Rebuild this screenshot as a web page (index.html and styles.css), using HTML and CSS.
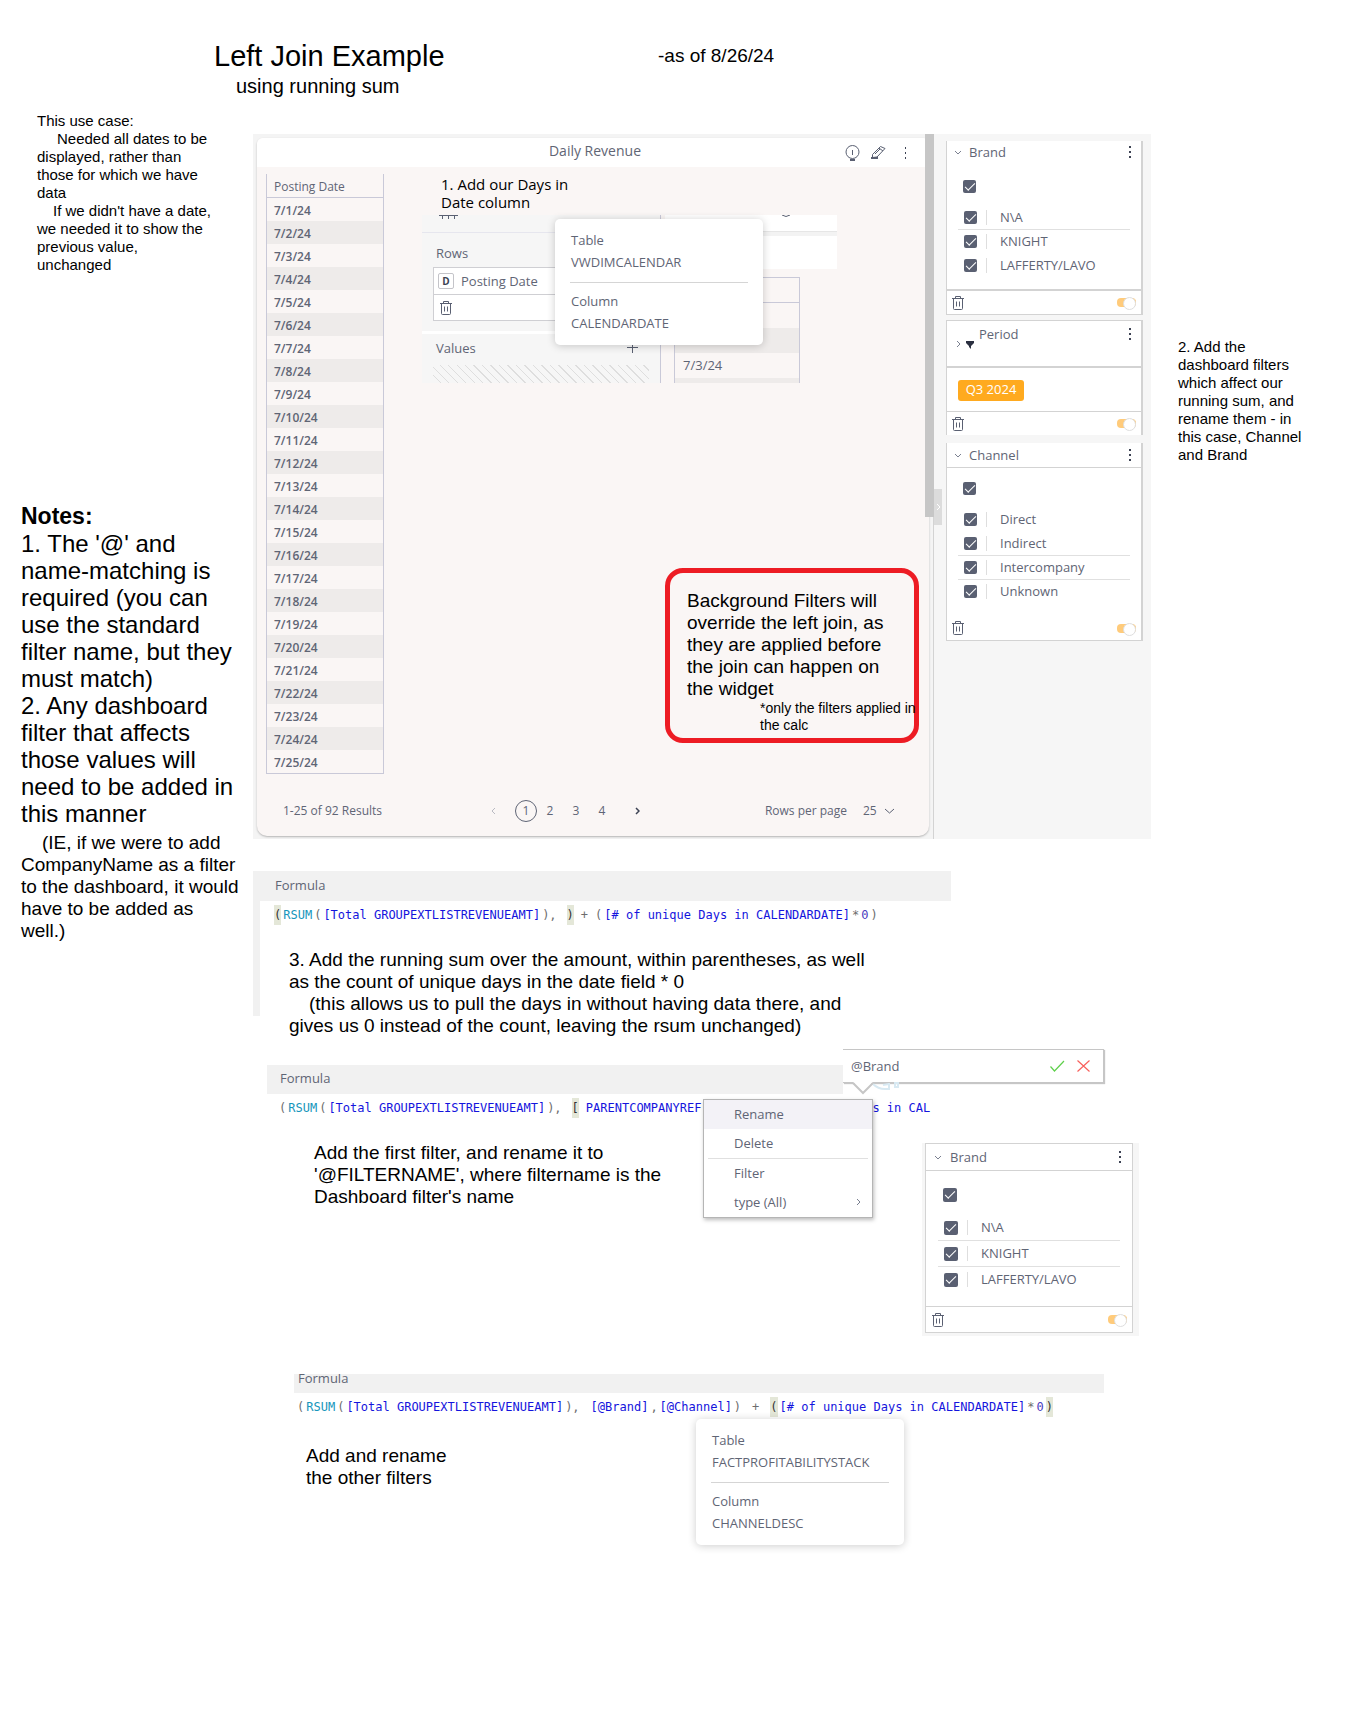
FILE: index.html
```html
<!DOCTYPE html>
<html lang="en">
<head>
<meta charset="utf-8">
<title>Left Join Example</title>
<link rel="stylesheet" href="styles.css">
</head>
<body>
<svg width="0" height="0" class="defs" aria-hidden="true">
  <symbol id="trash" viewBox="0 0 12 14"><path d="M0 2.5h12M3.5 2V.5h5V2M1.5 3v9.5q0 1 1 1h7q1 0 1-1V3M4.5 5.5v5M7.5 5.5v5" fill="none" stroke="#5a6072"/></symbol>
  <symbol id="dots" viewBox="0 0 2 12"><path d="M0 0h2v2H0zM0 5h2v2H0zM0 10h2v2H0z" fill="#3d4354"/></symbol>
  <symbol id="down" viewBox="0 0 8 5"><path d="M1 1l3 3 3-3" fill="none" stroke="#7a8090"/></symbol>
  <symbol id="right" viewBox="0 0 5 8"><path d="M1 1l3 3-3 3" fill="none" stroke="#7a8090"/></symbol>
</svg>

<header class="page-head">
  <div class="titles">
    <h1>Left Join Example</h1>
    <p class="subtitle">using running sum</p>
  </div>
  <p class="as-of">-as of 8/26/24</p>
</header>

<div class="page">
  <aside class="left">
    <div class="use-case note-small">
      <p>This use case:</p>
      <p class="indent">Needed all dates to be<br>displayed, rather than<br>those for which we have<br>data</p>
      <p class="indent-less">If we didn't have a date,<br>we needed it to show the<br>previous value,<br>unchanged</p>
    </div>
    <div class="notes">
      <h2>Notes:</h2>
      <p>1. The '@' and<br>name-matching is<br>required (you can<br>use the standard<br>filter name, but they<br>must match)</p>
      <p>2. Any dashboard<br>filter that affects<br>those values will<br>need to be added in<br>this manner</p>
      <p class="note aside-note">(IE, if we were to add<br>CompanyName as a filter<br>to the dashboard, it would<br>have to be added as<br>well.)</p>
    </div>
  </aside>

  <main>
    <section class="dashboard">
      <div class="stage">
        <article class="widget">
          <header class="widget-head">
            <h3>Daily Revenue</h3>
            <div class="tools">
              <svg width="15" height="16" viewBox="0 0 15 16"><circle cx="7.500" cy="7" r="6.500" fill="none" stroke="#5a6072"/><path d="M7.500 5v5" stroke="#5a6072"/><path d="M5 14h5v2H5z" fill="#5a6072"/></svg>
              <svg width="15" height="15" viewBox="0 0 15 15"><path d="M1.500 9.500l8-8 4.500 2-8 8.500-4.500.5zM8 3l4 3M4 9l5-5" fill="none" stroke="#5a6072"/><path d="M0 12h7v2H0z" fill="#5a6072"/></svg>
              <svg width="2" height="12" viewBox="0 0 2 12"><path d="M0 0h1v2H0zM0 5h1v2H0zM0 10h1v2H0z" fill="#3d4354"/></svg>
            </div>
          </header>
          <div class="widget-body">
            <table class="dates">
              <thead><tr><th>Posting Date</th></tr></thead>
              <tbody>
                <tr><td>7/1/24</td></tr><tr><td>7/2/24</td></tr><tr><td>7/3/24</td></tr><tr><td>7/4/24</td></tr><tr><td>7/5/24</td></tr>
                <tr><td>7/6/24</td></tr><tr><td>7/7/24</td></tr><tr><td>7/8/24</td></tr><tr><td>7/9/24</td></tr><tr><td>7/10/24</td></tr>
                <tr><td>7/11/24</td></tr><tr><td>7/12/24</td></tr><tr><td>7/13/24</td></tr><tr><td>7/14/24</td></tr><tr><td>7/15/24</td></tr>
                <tr><td>7/16/24</td></tr><tr><td>7/17/24</td></tr><tr><td>7/18/24</td></tr><tr><td>7/19/24</td></tr><tr><td>7/20/24</td></tr>
                <tr><td>7/21/24</td></tr><tr><td>7/22/24</td></tr><tr><td>7/23/24</td></tr><tr><td>7/24/24</td></tr><tr><td>7/25/24</td></tr>
              </tbody>
            </table>
            <div class="work">
              <p class="note-small step">1. Add our Days in<br>Date column</p>
              <div class="editor">
                <div class="fields">
                  <div class="fields-top"><svg width="20" height="4" viewBox="0 0 20 4"><path d="M0 .5h19M3.500 0v4M9.500 0v4M15.500 0v4" stroke="#5a6072" fill="none"/></svg></div>
                  <div class="rows-group">
                    <p>Rows</p>
                    <div class="field">
                      <div class="field-name"><b>D</b><span>Posting Date</span></div>
                      <div class="field-foot"><svg width="12" height="14"><use href="#trash"/></svg></div>
                    </div>
                  </div>
                  <div class="values-group">
                    <div class="values-head"><span>Values</span><svg width="11" height="11" viewBox="0 0 11 11"><path d="M5.500 0v11M0 5.500h11" stroke="#5a6072"/></svg></div>
                    <div class="hatch"></div>
                  </div>
                </div>
                <div class="preview">
                  <div class="preview-top"><svg width="10" height="3" viewBox="0 0 10 3"><path d="M1 0q4 3 8 0" fill="none" stroke="#5a6072"/></svg></div>
                  <div class="preview-bar"></div>
                  <div class="preview-grid"><i></i><i></i><i class="alt"></i><i>7/3/24</i><i class="alt last"></i></div>
                </div>
                <div class="tip tip-calendar">
                  <p>Table</p><p>VWDIMCALENDAR</p><hr><p>Column</p><p>CALENDARDATE</p>
                </div>
              </div>
              <div class="callout">
                <p class="note">Background Filters will<br>override the left join, as<br>they are applied before<br>the join can happen on<br>the widget</p>
                <p class="fine">*only the filters applied in<br>the calc</p>
              </div>
            </div>
          </div>
          <footer class="pager">
            <span class="results">1-25 of 92 Results</span>
            <nav aria-label="Pages">
              <button aria-label="Previous" class="faint"><svg width="5" height="8"><use href="#right" transform="rotate(180 2.500 4)"/></svg></button>
              <button class="current">1</button><button>2</button><button>3</button><button>4</button>
              <button aria-label="Next" class="next"><svg width="5" height="8" viewBox="0 0 5 8"><path d="M1 1l3 3-3 3" fill="none" stroke="#3d4354" stroke-width="1.500"/></svg></button>
            </nav>
            <label class="per-page">Rows per page
              <span class="pick"><select><option>25</option></select><svg width="11" height="6" viewBox="0 0 11 6"><path d="M1 1l4.500 4L10 1" fill="none" stroke="#5a6072"/></svg></span>
            </label>
          </footer>
        </article>
        <div class="scroll"></div>
      </div>

      <div class="filters">
        <div class="handle"><svg width="5" height="8" viewBox="0 0 5 8"><path d="M1 1l3 3-3 3" fill="none" stroke="#fff"/></svg></div>
        <section class="card card-brand">
          <header><svg width="8" height="5"><use href="#down"/></svg><h4>Brand</h4><svg width="2" height="12"><use href="#dots"/></svg></header>
          <div class="options">
            <label class="all"><input type="checkbox" checked aria-label="All brands"></label>
            <label class="ruled"><input type="checkbox" checked><span>N\A</span></label>
            <label><input type="checkbox" checked><span>KNIGHT</span></label>
            <label><input type="checkbox" checked><span>LAFFERTY/LAVO</span></label>
          </div>
          <footer><svg width="12" height="14"><use href="#trash"/></svg><input type="checkbox" class="toggle" checked aria-label="Brand filter on"></footer>
        </section>
        <section class="card card-period">
          <header><svg width="5" height="8"><use href="#right"/></svg><svg class="funnel" width="8" height="8" viewBox="0 0 8 8"><path d="M0 0h8v2L5 5v3L3 6V5L0 2z" fill="#2b3040"/></svg><h4>Period</h4><svg width="2" height="12"><use href="#dots"/></svg></header>
          <div class="chips"><span class="chip">Q3 2024</span></div>
          <footer><svg width="12" height="14"><use href="#trash"/></svg><input type="checkbox" class="toggle" checked aria-label="Period filter on"></footer>
        </section>
        <section class="card card-channel">
          <header><svg width="8" height="5"><use href="#down"/></svg><h4>Channel</h4><svg width="2" height="12"><use href="#dots"/></svg></header>
          <div class="options">
            <label class="all"><input type="checkbox" checked aria-label="All channels"></label>
            <label><input type="checkbox" checked><span>Direct</span></label>
            <label class="ruled"><input type="checkbox" checked><span>Indirect</span></label>
            <label class="ruled"><input type="checkbox" checked><span>Intercompany</span></label>
            <label><input type="checkbox" checked><span>Unknown</span></label>
          </div>
          <footer><svg width="12" height="14"><use href="#trash"/></svg><input type="checkbox" class="toggle" checked aria-label="Channel filter on"></footer>
        </section>
      </div>
    </section>

    <section class="formula formula-sum">
      <h3 class="bar">Formula</h3>
      <code><i class="hl">(</i><i class="fn">RSUM</i><i>(</i><i class="ref">[Total GROUPEXTLISTREVENUEAMT]</i><i>),</i><i class="hl far">)</i><i class="mid">+</i><i class="mid">(</i><i class="ref">[# of unique Days in CALENDARDATE]</i><i>*</i><i class="num">0</i><i>)</i></code>
      <p class="note">3. Add the running sum over the amount, within parentheses, as well<br>as the count of unique days in the date field * 0<br><span class="lead"></span>(this allows us to pull the days in without having data there, and<br>gives us 0 instead of the count, leaving the rsum unchanged)</p>
    </section>

    <section class="formula formula-rename">
      <h3 class="bar">Formula</h3>
      <code><i>(</i><i class="fn">RSUM</i><i>(</i><i class="ref">[Total GROUPEXTLISTREVENUEAMT]</i><i>),</i><i class="hl far">[</i><i class="ref mid">PARENTCOMPANYREF</i><i class="ref tail">s in CAL</i></code>
      <div class="split">
        <p class="note">Add the first filter, and rename it to<br>'@FILTERNAME', where filtername is the<br>Dashboard filter's name</p>
        <div class="card-wrap">
          <section class="card card-large">
            <header><svg width="8" height="5"><use href="#down"/></svg><h4>Brand</h4><svg width="2" height="12"><use href="#dots"/></svg></header>
            <div class="options">
              <label class="all"><input type="checkbox" checked aria-label="All brands"></label>
              <label class="ruled"><input type="checkbox" checked><span>N\A</span></label>
              <label class="ruled"><input type="checkbox" checked><span>KNIGHT</span></label>
              <label><input type="checkbox" checked><span>LAFFERTY/LAVO</span></label>
            </div>
            <footer><svg width="12" height="14"><use href="#trash"/></svg><input type="checkbox" class="toggle" checked aria-label="Brand filter on"></footer>
          </section>
        </div>
      </div>
      <div class="rename">
        <input type="text" value="@Brand" aria-label="Filter name">
        <button aria-label="Accept"><svg width="15" height="12" viewBox="0 0 15 12"><path d="M.5 6.500l4 4.500L14 1" fill="none" stroke="#5fd04c" stroke-width="1.200"/></svg></button>
        <button aria-label="Cancel"><svg width="13" height="12" viewBox="0 0 13 12"><path d="M.5.5l12 11M12.500.5l-12 11" fill="none" stroke="#f8605c" stroke-width="1.200"/></svg></button>
        <svg class="pointer" width="56" height="14" viewBox="0 0 56 14"><path d="M21 2q5 5 12 5h4V1M31 3l6-1M43 1h3v4h-3z" fill="none" stroke="#d8e9f2" stroke-width="2"/><path d="M1 0l10 10L21 0z" fill="#fff"/><path d="M1 1l10 10L21 1" fill="none" stroke="#c6c6c6" stroke-width="2"/></svg>
      </div>
      <div class="menu">
        <button class="active">Rename</button>
        <button>Delete</button>
        <hr>
        <button>Filter</button>
        <button>type (All)<svg width="5" height="8"><use href="#right"/></svg></button>
      </div>
    </section>

    <section class="formula formula-other">
      <h3 class="bar">Formula</h3>
      <code><i>(</i><i class="fn">RSUM</i><i>(</i><i class="ref">[Total GROUPEXTLISTREVENUEAMT]</i><i>),</i><i class="ref far">[@Brand]</i><i>,</i><i class="ref">[@Channel]</i><i>)</i><i class="mid">+</i><i class="hl mid">(</i><i class="ref">[# of unique Days in CALENDARDATE]</i><i>*</i><i class="num">0</i><i class="hl">)</i></code>
      <p class="note">Add and rename<br>the other filters</p>
      <div class="tip tip-channel">
        <p>Table</p><p>FACTPROFITABILITYSTACK</p><hr><p>Column</p><p>CHANNELDESC</p>
      </div>
    </section>
  </main>

  <aside class="right">
    <p class="note-small">2. Add the<br>dashboard filters<br>which affect our<br>running sum, and<br>rename them - in<br>this case, Channel<br>and Brand</p>
  </aside>
</div>
</body>
</html>
```
FILE: styles.css
```css
* { box-sizing: border-box; }
body { margin: 0; background: #fff; color: #000; font-family: "Liberation Sans", Arial, sans-serif; }
h1, h2, h3, h4, p { margin: 0; font-weight: normal; }
button, input, select { font: inherit; color: inherit; margin: 0; }
button { border: 0; background: none; padding: 0; }
svg { display: block; flex: none; }
.defs { position: absolute; }

/* page text */
.page-head { display: flex; padding: 39px 0 0 214px; height: 112px; }
.titles { width: 444px; }
h1 { font-size: 29px; line-height: 34px; }
.subtitle { font-size: 20px; line-height: 26px; padding-left: 22px; }
.as-of { font-size: 19px; line-height: 34px; }
.page { display: grid; grid-template-columns: 253px minmax(0, 1fr) 197px; padding-bottom: 160px; }
.note { font-size: 19px; line-height: 22px; white-space: nowrap; }
.note-small { font-size: 15px; line-height: 18px; white-space: nowrap; }
.use-case { padding-left: 37px; height: 391px; }
.indent { text-indent: 20px; }
.indent-less { text-indent: 16px; }
.notes { padding-left: 21px; font-size: 24px; line-height: 27px; white-space: nowrap; }
.notes h2 { font-size: 23px; line-height: 27px; font-weight: bold; }
.aside-note { text-indent: 21px; padding-top: 5px; }
.lead { display: inline-block; width: 20px; }
.right { padding: 226px 0 0 27px; }
main { padding-top: 22px; min-width: 0; }

/* dashboard */
.dashboard, .formula h3, .menu, .rename, .tip, .card { font-family: "Open Sans", "Noto Sans", sans-serif; font-size: 13px; color: #5f6575; }
.dashboard { display: grid; grid-template-columns: minmax(0, 1fr) 217px; background: #f6f6f6; }
.stage { position: relative; padding: 4px 4px 3px 4px; border-right: 1px solid #d3d3d3; background: #f4f4f4; }
.widget { background: #faf6f5; border-radius: 6px 6px 10px 10px; box-shadow: 0 1px 2px #b5b5b5; overflow: hidden; }
.scroll { position: absolute; top: 0; right: -1px; width: 9px; height: 383px; background: #c6c6c6; }
.widget-head { display: flex; align-items: center; justify-content: flex-end; height: 29px; background: #fff; }
.widget-head h3 { font-size: 14px; line-height: 20px; padding-bottom: 3px; margin-right: 204px; }
.tools { display: flex; align-items: center; gap: 11px; width: 84px; }
.tools svg:last-child { margin-left: 8px; }
.widget-body { display: flex; padding: 7px 0 0 9px; }
.dates { width: 118px; flex: none; border-collapse: separate; border-spacing: 0; border: 1px solid #c9c9d8; border-top: 0; font-size: 12px; line-height: 16px; }
.dates th { height: 24px; padding: 3px 7px 0; text-align: left; font-size: 12px; font-weight: normal; border-bottom: 1px solid #c9c9d8; }
.dates td { height: 23px; padding: 2px 7px 0; font-weight: 600; font-size: 12px; }
.dates tr:nth-child(even) td { background: #eeebea; }
.work { padding-left: 38px; }
.step { padding: 1px 0 4px 19px; color: #000; }

.editor { position: relative; display: flex; width: 415px; height: 168px; }
.fields { width: 239px; background: #f6f6f6; border-right: 1px solid #c9c9d8; }
.fields-top { height: 18px; padding-left: 17px; border-bottom: 1px solid #e6e6ee; }
.rows-group { height: 101px; padding: 10px 0 0 11px; border-bottom: 3px solid #fff; }
.rows-group p { line-height: 20px; padding-left: 3px; }
.field { margin-top: 4px; background: #fff; border: 1px solid #cfcfd3; width: 216px; }
.field-name, .field-foot { display: flex; align-items: center; height: 27px; padding-left: 4px; gap: 7px; border-bottom: 1px solid #cfcfd3; }
.field-foot { height: 25px; padding-left: 6px; border: 0; }
.field-name b { width: 16px; height: 16px; border: 1px solid #c4c4c9; font-size: 10px; line-height: 14px; text-align: center; color: #3d4354; border-radius: 2px; }
.values-group { padding: 0 11px; }
.values-head { display: flex; justify-content: space-between; align-items: center; height: 27px; padding: 0 11px 0 3px; }
.hatch { margin-top: 4px; height: 18px; background: repeating-linear-gradient(45deg, #f6f6f6 0 5px, #dedede 5px 6px); }
.preview { flex: 1; padding-left: 4px; }
.preview-top { height: 17px; background: #fff; border-bottom: 1px solid #e6e6e6; padding-left: 116px; }
.preview-bar { height: 37px; background: #fff; border-top: 4px solid #f3f3f3; }
.preview-grid { margin: 8px 0 0 9px; width: 126px; height: 106px; border: 1px solid #c9c9d8; border-bottom: 0; font-weight: 600; }
.preview-grid i { display: block; height: 25px; padding-left: 8px; font-style: normal; font-weight: 500; line-height: 24px; }
.preview-grid i:first-child { border-bottom: 1px solid #c9c9d8; }
.preview-grid .alt { background: #eeebea; }
.preview-grid .last { height: 5px; }

.tip { position: absolute; width: 208px; padding: 10px 15px 11px; background: #fff; border-radius: 5px; box-shadow: 0 1px 9px #0003; line-height: 22px; }
.tip p { padding-left: 1px; white-space: nowrap; }
.tip hr { border: 0; border-top: 1px solid #d5d5d5; margin: 9px 0 7px; }
.tip-calendar { left: 133px; top: 4px; }
.tip-channel { left: 402px; top: 45px; }

.callout { margin: 185px 0 0 243px; width: 254px; height: 175px; border: 5px solid #ed1c24; border-radius: 18px; padding: 17px 0 0 17px; color: #000; font-family: "Liberation Sans", Arial, sans-serif; }
.fine { font-size: 14px; line-height: 17px; padding-left: 73px; white-space: nowrap; }

.pager { display: flex; align-items: center; height: 62px; padding: 11px 34px 0 26px; }
.results { width: 210px; font-size: 12px; }
.pager nav { display: flex; align-items: center; flex: 1; }
.pager nav button { width: 26px; text-align: center; font-size: 12px; }
.pager nav svg { margin: auto; }
.pager nav .faint { width: 8px; margin-right: 14px; margin-left: -4px; opacity: 0.5; }
.pager nav .current { width: 22px; height: 22px; border: 1px solid #5f6575; border-radius: 50%; margin-left: 4px; }
.pager nav .next { margin-left: 9px; }
.per-page { display: flex; align-items: center; gap: 16px; font-size: 12px; white-space: nowrap; }
.pick { display: flex; align-items: center; gap: 6px; }
.per-page select { appearance: none; border: 0; background: none; font-size: 12px; width: 15px; padding: 0; }

/* filter cards */
.filters { position: relative; padding: 7px 8px 0 12px; }
.handle { position: absolute; left: 0; top: 355px; width: 8px; height: 36px; background: #dcdcdc; display: grid; place-items: center; }
.card { background: #fff; border: solid #d3d3d3; border-width: 0 2px 1px 1px; }
.card header { display: flex; align-items: center; padding: 0 10px 0 7px; height: 22px; }
.card h4 { flex: 1; font-size: 13px; padding-left: 7px; }
.options { padding: 12px 11px 11px; }
.options label { display: flex; align-items: center; height: 24px; padding-left: 6px; gap: 9px; font-size: 13px; border-bottom: 1px solid transparent; }
.options .all { padding-left: 5px; margin-bottom: 7px; }
.options .ruled { border-color: #e0e0e0; }
.options span { border-left: 1px solid #dedede; padding-left: 13px; line-height: 15px; }
.options input { appearance: none; position: relative; width: 13px; height: 13px; border-radius: 2px; background: #5a6072; }
.options input::after { content: ""; position: absolute; left: 2px; top: 3px; width: 9px; height: 4px; border: solid #fff; border-width: 0 0 1px 1px; transform: rotate(-45deg); }
.card footer { display: flex; align-items: center; justify-content: space-between; padding: 0 5px; height: 25px; border-top: 2px solid #d3d3d3; }
.toggle { appearance: none; position: relative; width: 19px; height: 9px; border-radius: 4px; background: #ffcb7b; }
.toggle::after { content: ""; position: absolute; right: 0; top: -1px; width: 11px; height: 11px; border-radius: 50%; background: #fff; border: 1px solid #dedede; }
.card-period { margin-top: 5px; border-top-width: 1px; border-bottom: 0; }
.card-period header { height: 45px; padding-bottom: 20px; border-bottom: 0; }
.card-period header svg:first-child { margin: 20px 0 0 2px; }
.card-period .funnel { margin: 22px 0 0 5px; }
.card-period h4 { padding-left: 5px; }
.chips { padding: 12px 11px 10px; height: 45px; border-top: 2px solid #d3d3d3; }
.chip { display: block; width: 66px; height: 21px; border-radius: 3px; background: #ffaa1f; color: #fff; font-size: 13px; line-height: 19px; text-align: center; }
.card-period footer { border-top-width: 1px; height: 24px; }
.card-channel { margin-top: 8px; }
.card-channel header { height: 25px; border-bottom: 1px solid #d3d3d3; }
.card-channel .options { padding: 9px 11px 12px; }
.card-channel footer { border: 0; height: 24px; }
.card-wrap { margin: 2px 12px 0 auto; width: 217px; padding: 0 6px 3px 3px; background: #f6f6f6; }
.card-large { border-width: 1px; }
.card-large header { height: 27px; padding: 0 11px 0 8px; border-bottom: 1px solid #d3d3d3; }
.card-large h4 { padding-left: 8px; }
.card-large .options { padding: 11px 12px 13px; }
.card-large .options label { height: 26px; }
.card-large .options .all { margin-bottom: 7px; }
.card-large .options input { width: 14px; height: 14px; }
.card-large footer { height: 26px; border-top-width: 1px; padding: 0 5px 0 6px; }

/* formulas */
.formula { position: relative; }
.formula h3 { height: 30px; line-height: 28px; padding-left: 22px; background: #f1f1f1; }
code { display: flex; align-items: center; gap: 2px; height: 28px; font: 12px/20px "DejaVu Sans Mono", monospace; white-space: pre; color: #6d6d6d; }
code i { font-style: normal; }
.fn { color: #1696bb; }
.ref { color: #1414dd; }
.num { color: #4a3cc0; }
.hl { background: #e4e7d8; color: #333; }
code .far { margin-left: 8px; }
code .mid { margin-left: 5px; }
.formula-sum { margin: 32px 200px 0 0; background: linear-gradient(#f1f1f1, #f1f1f1) 0 0 / 7px 145px no-repeat; }
.formula-sum code { padding-left: 21px; }
.formula-sum .note { padding: 20px 0 0 36px; }
.formula-rename { margin: 28px 0 0 14px; }
.formula-rename h3 { width: 576px; height: 29px; line-height: 27px; padding-left: 13px; }
.formula-rename code { padding-left: 12px; }
.formula-rename .note { padding: 1px 0 0 47px; }
.formula-rename .tail { margin-left: 169px; }
.split { display: flex; padding-top: 19px; }
.formula-other { margin: 38px 47px 0 41px; }
.formula-other h3 { height: 19px; line-height: 8px; padding-left: 4px; overflow: hidden; }
.formula-other code { padding-left: 3px; }
.formula-other code .mid, .formula-other code .far { margin-left: 9px; }
.formula-other .note { padding: 24px 0 0 12px; }

.rename { position: absolute; left: 576px; top: -16px; width: 261px; height: 34px; display: flex; align-items: center; gap: 12px; padding: 0 13px 0 8px; background: #fff; border: 1px solid #c6c6c6; border-left: 0; box-shadow: 1px 1px 1px #c6c6c6; }
.rename input { flex: 1; min-width: 0; border: 0; padding: 0; background: none; }
.pointer { position: absolute; left: 9px; top: 32px; }
.menu { position: absolute; left: 436px; top: 34px; width: 170px; background: #fff; border: 1px solid #b5b5b5; box-shadow: 1px 2px 4px #0004; }
.menu button { display: flex; align-items: center; justify-content: space-between; width: 100%; height: 29px; padding: 0 11px 2px 30px; }
.menu .active { background: #f3f2f7; }
.menu hr { border: 0; border-top: 1px solid #e0e0e0; margin: 0 4px; }
```
